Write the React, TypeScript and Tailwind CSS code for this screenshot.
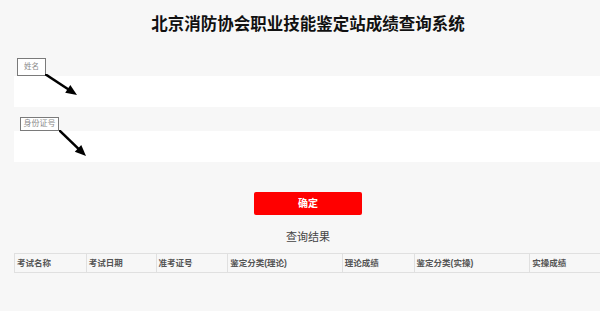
import React from 'react';

const columns = [
  { label: '考试名称', w: 'w-[72px]' },
  { label: '考试日期', w: 'w-[70px]' },
  { label: '准考证号', w: 'w-[72px]' },
  { label: '鉴定分类(理论)', w: 'w-[115px]' },
  { label: '理论成绩', w: 'w-[72px]' },
  { label: '鉴定分类(实操)', w: 'w-[116px]' },
  { label: '实操成绩', w: 'w-[72px]' },
];

const font = { fontFamily: '"Liberation Sans", "Noto Sans CJK SC", sans-serif' };

// annotation arrow drawn over the field
const Arrow = ({ className, x2, y2 }: { className: string; x2: number; y2: number }) => {
  const ang = Math.atan2(y2, x2);
  const len = 12;
  const spread = 0.4;
  const p1 = [x2 - len * Math.cos(ang - spread), y2 - len * Math.sin(ang - spread)];
  const p2 = [x2 - len * Math.cos(ang + spread), y2 - len * Math.sin(ang + spread)];
  return (
    <svg className={className} width={x2 + 2} height={y2 + 2} viewBox={`0 0 ${x2 + 2} ${y2 + 2}`}>
      <line x1="0" y1="0" x2={x2 - 6 * Math.cos(ang)} y2={y2 - 6 * Math.sin(ang)} stroke="#000" strokeWidth="2.5" />
      <polygon points={`${x2},${y2} ${p1[0]},${p1[1]} ${p2[0]},${p2[1]}`} fill="#000" />
    </svg>
  );
};

const Field = ({ label, labelClass, arrow }: { label: string; labelClass: string; arrow: React.ReactNode }) => (
  <div className="relative">
    <div className={`bg-white border border-[#7a7a7a] text-[#8a8a8a] flex items-center justify-center ${labelClass}`}>
      {label}
    </div>
    <div className="h-[31px] bg-white" />
    {arrow}
  </div>
);

export default function App() {
  return (
    <div className="w-full h-[311px] overflow-hidden bg-[#f7f7f7]" style={font}>
      <div className="w-[616px] px-[14px]">
        <h1 className="text-[16.5px] leading-[24px] font-bold text-[#111] text-center pt-[12px]">
          北京消防协会职业技能鉴定站成绩查询系统
        </h1>

        <div className="mt-[22px]">
          <Field
            label="姓名"
            labelClass="ml-[3px] w-[29px] h-[18px] text-[7.5px]"
            arrow={<Arrow className="absolute left-[31px] top-[16px]" x2={32} y2={21} />}
          />
        </div>
        <div className="mt-[10px]">
          <Field
            label="身份证号"
            labelClass="ml-[6px] w-[39px] h-[14px] text-[8px]"
            arrow={<Arrow className="absolute left-[45px] top-[13px]" x2={27} y2={26} />}
          />
        </div>

        <div className="flex justify-center mt-[30px]">
          <button className="w-[108px] h-[23px] bg-[#ff0000] rounded-[2px] text-white text-[10px] font-bold">
            确定
          </button>
        </div>

        <p className="text-center text-[11px] text-[#444] mt-[15px] leading-[14px]">查询结果</p>

        <table className="mt-[9px] border-collapse">
          <thead>
            <tr>
              {columns.map((c) => (
                <th
                  key={c.label}
                  className={`${c.w} h-[19px] border border-[#e0e0e0] text-left font-bold text-[8.5px] text-[#555] pl-[2px] p-0`}
                >
                  {c.label}
                </th>
              ))}
            </tr>
          </thead>
        </table>
      </div>
    </div>
  );
}
